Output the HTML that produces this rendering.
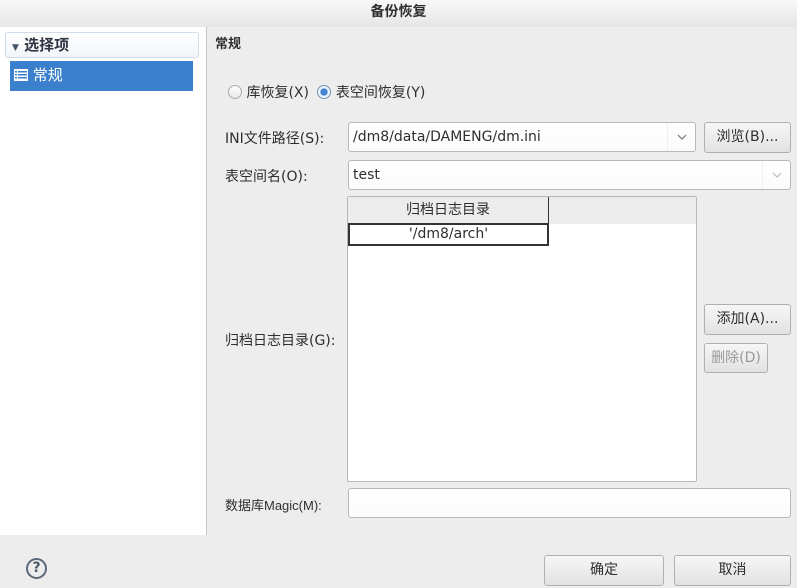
<!DOCTYPE html>
<html><head><meta charset="utf-8"><style>
*{box-sizing:border-box;margin:0;padding:0}
body{width:797px;height:588px;background:#ededed;font-family:"DejaVu Sans","Noto Sans CJK SC",sans-serif;font-size:14px;color:#2e2e2e;position:relative;overflow:hidden}
.a{position:absolute}
.title{left:0;top:0;width:797px;height:27px;background:linear-gradient(#f8f8f8,#e6e6e6);text-align:center;font-weight:bold;line-height:24px;font-size:14px}
.left{left:0;top:27px;width:207px;height:508px;background:#fff;border-right:1px solid #c8c8c8}
.inp{background:linear-gradient(#fff,#fbfbfb);border:1px solid #b8b8b8;border-radius:3px;padding-left:4px;line-height:28px;font-size:14px}
.btn{background:linear-gradient(#f6f6f6,#e2e2e2);border:1px solid #b0b0b0;border-radius:3px;text-align:center;line-height:28px}
.dd{position:absolute;right:0;top:0;width:28px;height:28px;border-left:1px solid #f0f0f0}
</style></head><body>
<div class="a title">备份恢复</div>
<div class="a left">
 <div class="a" style="left:5px;top:5px;width:194px;height:26px;border:1px solid #d0dbe8;border-radius:3px;background:linear-gradient(#fff,#f2f5f9);font-weight:bold;color:#334;line-height:24px;padding-left:6px;font-size:15px"><span style="font-size:9px;color:#456">▼</span> 选择项</div>
 <div class="a" style="left:10px;top:34px;width:183px;height:30px;background:#3a80cc;color:#fff;line-height:28px;padding-left:4px;font-size:15px">
  <svg width="14" height="12" style="vertical-align:-1px"><rect x="0" y="0" width="14" height="12" fill="#fff"/><g fill="#3a80cc"><rect x="1" y="2" width="2" height="1.5"/><rect x="4" y="2" width="9" height="1.5"/><rect x="1" y="5" width="2" height="1.5"/><rect x="4" y="5" width="9" height="1.5"/><rect x="1" y="8" width="2" height="1.5"/><rect x="4" y="8" width="9" height="1.5"/></g></svg> 常规</div>
</div>
<div class="a" style="left:215px;top:33px;font-weight:bold;font-size:13px">常规</div>
<div class="a" style="left:228px;top:84px;line-height:18px">
 <span style="display:inline-block;width:14px;height:14px;border:1px solid #aaa;border-radius:50%;background:linear-gradient(#fff,#e8e8e8);vertical-align:-2px"></span> 库恢复(X)
 <span style="display:inline-block;width:14px;height:14px;border:1px solid #6a8fb8;border-radius:50%;background:radial-gradient(circle,#4a8fe0 0,#3a7cc8 3px,#dde8f4 4px,#fff 6px);vertical-align:-2px;margin-left:4px"></span> 表空间恢复(Y)
</div>
<div class="a" style="left:225px;top:128px">INI文件路径(S):</div>
<div class="a inp" style="left:348px;top:122px;width:348px;height:30px">/dm8/data/DAMENG/dm.ini<div class="dd"><svg width="28" height="28"><path d="M10 12l4 4 4-4" fill="none" stroke="#777" stroke-width="1.2"/></svg></div></div>
<div class="a btn" style="left:704px;top:122px;width:87px;height:31px">浏览(B)...</div>
<div class="a" style="left:225px;top:166px">表空间名(O):</div>
<div class="a inp" style="left:348px;top:160px;width:443px;height:30px">test<div class="dd"><svg width="28" height="28"><path d="M10 12l4 4 4-4" fill="none" stroke="#bbb" stroke-width="1.2"/></svg></div></div>
<div class="a" style="left:347px;top:196px;width:350px;height:286px;background:#fff;border:1px solid #b8b8b8;border-radius:2px">
 <div class="a" style="left:0;top:0;width:348px;height:27px;background:#ececec"></div>
 <div class="a" style="left:0;top:0;width:201px;height:27px;border-right:1px solid #333;text-align:center;line-height:26px">归档日志目录</div>
 <div class="a" style="left:0;top:26px;width:201px;height:23px;border:2px solid #333;text-align:center;line-height:19px">'/dm8/arch'</div>
</div>
<div class="a" style="left:225px;top:330px">归档日志目录(G):</div>
<div class="a btn" style="left:704px;top:304px;width:87px;height:31px">添加(A)...</div>
<div class="a btn" style="left:704px;top:343px;width:64px;height:30px;color:#999">删除(D)</div>
<div class="a" style="left:225px;top:495px;font-size:13px;font-family:'Liberation Sans','Noto Sans CJK SC',sans-serif">数据库Magic(M):</div>
<div class="a inp" style="left:348px;top:488px;width:443px;height:30px"></div>
<div class="a" style="left:26px;top:558px;width:21px;height:21px;border:2px solid #5a6a7a;border-radius:50%;text-align:center;font-weight:bold;line-height:17px;color:#4a5a6a;font-size:14px">?</div>
<div class="a btn" style="left:544px;top:555px;width:120px;height:31px">确定</div>
<div class="a btn" style="left:674px;top:555px;width:117px;height:31px">取消</div>
</body></html>
